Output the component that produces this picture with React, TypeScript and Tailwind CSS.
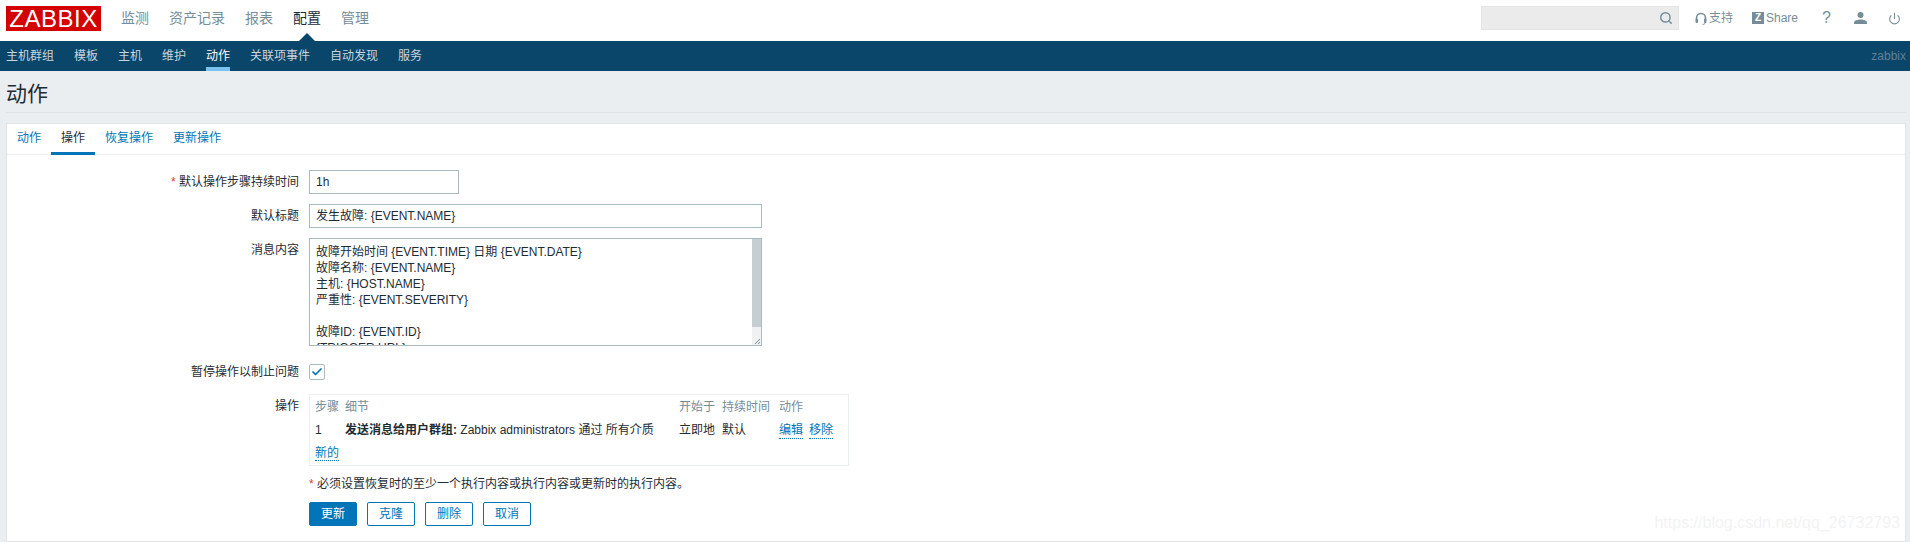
import { Search, Power, Check } from 'lucide-react';

const FONT = "font-['Arial','Liberation_Sans','Noto_Sans_CJK_SC',sans-serif]";

const mainNav = ['监测', '资产记录', '报表', '配置', '管理'];
const subNav = ['主机群组', '模板', '主机', '维护', '动作', '关联项事件', '自动发现', '服务'];
const tabs = ['动作', '操作', '恢复操作', '更新操作'];
const messageLines = [
  '故障开始时间 {EVENT.TIME} 日期 {EVENT.DATE}',
  '故障名称: {EVENT.NAME}',
  '主机: {HOST.NAME}',
  '严重性: {EVENT.SEVERITY}',
  '',
  '故障ID: {EVENT.ID}',
  '{TRIGGER.URL}',
];

function Label({ children, required }: { children: string; required?: boolean }) {
  return (
    <div className="w-[292px] shrink-0 text-right text-[12px] leading-[16px] text-[#1f2c33]">
      {required && <span className="text-[#e33734]">* </span>}
      {children}
    </div>
  );
}

function DottedLink({ children }: { children: string }) {
  return <a className="border-b border-dotted border-[#0275b8] text-[#0275b8]">{children}</a>;
}

export default function App() {
  return (
    <div className={`${FONT} relative h-[542px] w-[1910px] overflow-hidden bg-[#ebeef0]`}>
      {/* Top bar */}
      <header className="flex h-[41px] items-start bg-white pl-[6px] pr-[9px]">
        <div className="mt-[6px] flex h-[25px] w-[95px] items-center justify-center bg-[#d40000] text-[24px] leading-none tracking-[0.5px] text-white">
          ZABBIX
        </div>
        <nav className="ml-[20px] mt-[9px] flex gap-[20px] text-[14px] leading-[18px] text-[#768d99]">
          {mainNav.map((item) => (
            <span key={item} className={`relative ${item === '配置' ? 'text-[#1f2c33]' : ''}`}>
              {item}
              {item === '配置' && (
                <span className="absolute left-[6px] top-[24px] h-0 w-0 border-x-[8px] border-b-[8px] border-x-transparent border-b-[#0a466a]" />
              )}
            </span>
          ))}
        </nav>
        <div className="ml-auto flex items-start">
          <div className="mt-[6px] flex h-[24px] w-[198px] items-center justify-end border border-[#e5e5e5] bg-[#ebebeb] pr-[5px]">
            <Search className="h-[14px] w-[14px] text-[#768d99]" strokeWidth={2.5} />
          </div>
          <div className="ml-[16px] mt-[11px] flex items-center text-[12px] leading-[14px] text-[#768d99]">
            {/* headset */}
            <svg width="12" height="13" viewBox="0 0 12 13" fill="none">
              <path d="M1.5 7.5V6a4.5 4.5 0 0 1 9 0v1.5" stroke="#768d99" strokeWidth="1.6" />
              <rect x="0.5" y="6.5" width="2.5" height="4.5" rx="1" fill="#768d99" />
              <rect x="9" y="6.5" width="2.5" height="4.5" rx="1" fill="#768d99" />
              <path d="M10 11c0 1-1 1.4-2.5 1.4" stroke="#768d99" strokeWidth="1" />
            </svg>
            <span className="ml-[2px]">支持</span>
          </div>
          <div className="ml-[19px] mt-[11px] flex items-center text-[12px] leading-[14px] text-[#768d99]">
            <span className="flex h-[12px] w-[12px] items-center justify-center bg-[#768d99] text-[10px] font-bold leading-none text-white">Z</span>
            <span className="ml-[2px]">Share</span>
          </div>
          <div className="ml-[24px] mt-[8px] w-[8px] text-[16px] leading-[20px] text-[#768d99]">?</div>
          {/* user */}
          <svg className="ml-[24px] mt-[12px]" width="13" height="12" viewBox="0 0 13 12">
            <circle cx="6.5" cy="3" r="3" fill="#768d99" />
            <path d="M0 12V10.5C0 8.5 3.5 7.5 6.5 7.5S13 8.5 13 10.5V12Z" fill="#768d99" />
          </svg>
          <Power className="ml-[21px] mt-[12px] h-[13px] w-[13px] text-[#768d99]" strokeWidth={2} />
        </div>
      </header>

      {/* Sub navigation */}
      <div className="flex h-[30px] items-stretch bg-[#0a466a] pl-[6px] pr-[4px] text-[12px]">
        <div className="flex gap-[20px]">
          {subNav.map((item) => (
            <div
              key={item}
              className={`flex items-center border-b-[4px] pt-[4px] ${
                item === '动作' ? 'border-[#7cc2ee] text-white' : 'border-transparent text-[#c8d5dd]'
              }`}
            >
              {item}
            </div>
          ))}
        </div>
        <div className="ml-auto flex items-center text-[#5f8098]">zabbix</div>
      </div>

      {/* Page title */}
      <div className="ml-[6px] mr-[4px] h-[42px] border-b border-[#dfe4e7] pt-[10px] text-[21px] leading-[26px] text-[#1f2c33]">动作</div>

      {/* Card */}
      <main className="ml-[6px] mr-[4px] mt-[10px] h-[419px] border border-[#dfe4e7] bg-white">
        <div className="flex h-[31px] border-b border-[#ebeef0] text-[12px] text-[#0275b8]">
          {tabs.map((tab) => (
            <div
              key={tab}
              className={`-mb-px flex items-center border-b-[3px] px-[10px] ${
                tab === '操作' ? 'border-[#0275b8] text-[#1f2c33]' : 'border-transparent'
              }`}
            >
              {tab}
            </div>
          ))}
        </div>

        <div className="flex flex-col pt-[15px]">
          <div className="flex">
            <div className="mt-[4px]">
              <Label required>默认操作步骤持续时间</Label>
            </div>
            <div className="ml-[10px] flex h-[24px] w-[150px] items-center border border-[#acbbc2] px-[6px] text-[12px] text-[#1f2c33]">1h</div>
          </div>

          <div className="mt-[10px] flex">
            <div className="mt-[4px]">
              <Label>默认标题</Label>
            </div>
            <div className="ml-[10px] flex h-[24px] w-[453px] items-center border border-[#acbbc2] px-[6px] text-[12px] text-[#1f2c33]">发生故障: {'{EVENT.NAME}'}</div>
          </div>

          <div className="mt-[10px] flex">
            <div className="mt-[4px]">
              <Label>消息内容</Label>
            </div>
            <div className="ml-[10px] flex h-[108px] w-[453px] overflow-hidden border border-[#acbbc2]">
              <div className="flex-1 overflow-hidden px-[6px] pt-[5px] text-[12px] leading-[16px] text-[#1f2c33]">
                {messageLines.map((line, i) => (
                  <div key={i} className="h-[16px] whitespace-nowrap">{line}</div>
                ))}
              </div>
              <div className="relative flex w-[9px] flex-col bg-[#f1f1f1]">
                <div className="h-[88px] bg-[#c5ced3]" />
                <svg className="absolute bottom-0 right-0" width="9" height="9" viewBox="0 0 9 9">
                  <path d="M8 3 3 8M8 6 6 8" stroke="#768d99" strokeWidth="1" fill="none" />
                </svg>
              </div>
            </div>
          </div>

          <div className="mt-[18px] flex items-center">
            <Label>暂停操作以制止问题</Label>
            <div className="ml-[10px] flex h-[16px] w-[16px] items-center justify-center rounded-[2px] border border-[#acbbc2]">
              <Check className="h-[12px] w-[12px] text-[#0275b8]" strokeWidth={3.5} />
            </div>
          </div>

          <div className="mt-[14px] flex">
            <div className="mt-[4px]">
              <Label>操作</Label>
            </div>
            <div className="ml-[10px] h-[72px] w-[540px] border border-[#ebeef0] px-[5px] pt-[4px] text-[12px] leading-[16px] text-[#1f2c33]">
              <div className="grid grid-cols-[30px_334px_43px_57px_70px] text-[#768d99]">
                <span>步骤</span>
                <span>细节</span>
                <span>开始于</span>
                <span>持续时间</span>
                <span>动作</span>
              </div>
              <div className="mt-[7px] grid grid-cols-[30px_334px_43px_57px_70px]">
                <span>1</span>
                <span className="whitespace-nowrap">
                  <b>发送消息给用户群组:</b> Zabbix administrators 通过 所有介质
                </span>
                <span>立即地</span>
                <span>默认</span>
                <span className="flex gap-[6px]">
                  <DottedLink>编辑</DottedLink>
                  <DottedLink>移除</DottedLink>
                </span>
              </div>
              <div className="mt-[6px]">
                <DottedLink>新的</DottedLink>
              </div>
            </div>
          </div>

          <div className="ml-[302px] mt-[10px] text-[12px] leading-[16px] text-[#1f2c33]">
            <span className="text-[#e33734]">* </span>必须设置恢复时的至少一个执行内容或执行内容或更新时的执行内容。
          </div>

          <div className="ml-[302px] mt-[10px] flex gap-[10px] text-[12px]">
            <button className="h-[24px] w-[48px] rounded-[2px] border border-[#0275b8] bg-[#0275b8] text-white">更新</button>
            <button className="h-[24px] w-[48px] rounded-[2px] border border-[#0275b8] text-[#0275b8]">克隆</button>
            <button className="h-[24px] w-[48px] rounded-[2px] border border-[#0275b8] text-[#0275b8]">删除</button>
            <button className="h-[24px] w-[48px] rounded-[2px] border border-[#0275b8] text-[#0275b8]">取消</button>
          </div>
        </div>
      </main>

      {/* Watermark */}
      <div className="absolute right-[10px] top-[512px] text-[16px] leading-[22px] text-[#f3f3f3]">https://blog.csdn.net/qq_26732793</div>
    </div>
  );
}
